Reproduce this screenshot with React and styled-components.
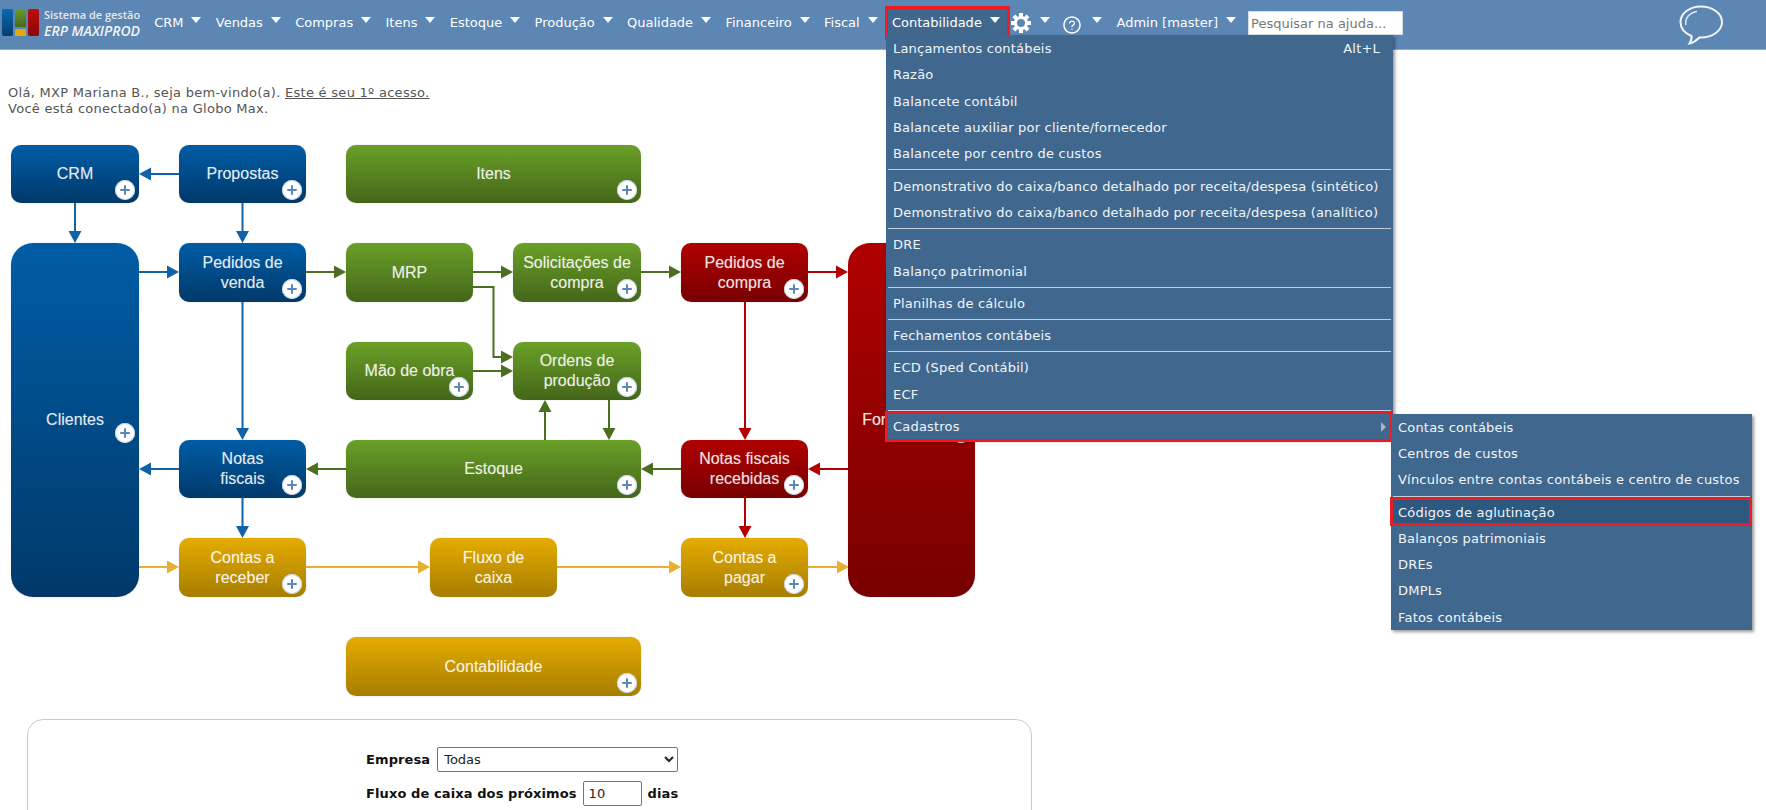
import React from "react";
import styled, { createGlobalStyle } from "styled-components";
import { AiOutlineQuestionCircle } from "react-icons/ai";

const GlobalStyle = createGlobalStyle`
  html, body {
    margin: 0;
    padding: 0;
    height: 810px;
    overflow: hidden;
    background: #fff;
  }
  body {
    font-family: "DejaVu Sans", Verdana, sans-serif;
    font-size: 13px;
    color: #555;
  }
`;

const tones = {
  blue: "linear-gradient(#005da6, #00396a)",
  green: "linear-gradient(#6aa028, #446619)",
  red: "linear-gradient(#b00000, #780000)",
  gold: "linear-gradient(#e5ac00, #a67d00)",
};

const arrowColors = {
  blue: "#0f62a8",
  green: "#4b6f1e",
  red: "#b40000",
  gold: "#e8b030",
};

const Page = styled.div`
  position: relative;
  width: 1766px;
  height: 810px;
  overflow: hidden;
`;

const Header = styled.header`
  display: flex;
  align-items: flex-start;
  height: 49px;
  background: #5c86b3;
  border-bottom: 1px solid #9aa9b8;
`;

const Logo = styled.div`
  display: flex;
  gap: 5px;
  width: 147px;
  flex: none;
  padding-top: 9px;
  box-sizing: border-box;
  padding-left: 2px;
`;

const LogoText = styled.div`
  font-family: "Open Sans", sans-serif;
  color: #e4e9ee;
  line-height: 14px;
  white-space: nowrap;
`;

const LogoTop = styled.div`
  font-size: 11px;
  font-weight: 600;
  margin-top: -1px;
`;

const LogoName = styled.div`
  font-size: 14px;
  font-weight: 600;
  font-style: italic;
  margin-top: 2px;
  color: #f0f3f6;
`;

const Nav = styled.nav`
  display: flex;
  align-items: flex-start;
  padding-top: 9px;
  flex: none;
`;

const NavItem = styled.div`
  position: relative;
  display: flex;
  align-items: flex-start;
  height: 26px;
  padding: 0 ${(p) => p.$right ?? 7.15}px 0 ${(p) => p.$left ?? 7.15}px;
  color: #fff;
  line-height: 28px;
  white-space: nowrap;
  background: ${(p) => (p.$active ? "#40688f" : "transparent")};

  ${(p) =>
    p.$active &&
    `
    &::after {
      content: "";
      position: absolute;
      inset: -3px -3px -5px 0;
      border: 3px solid #ed1c24;
      pointer-events: none;
    }
  `}
`;

const Caret = styled.span`
  width: 0;
  height: 0;
  margin: 8px 0 0 ${(p) => p.$gap ?? 8}px;
  border-left: 5px solid transparent;
  border-right: 5px solid transparent;
  border-top: 6px solid #fff;
  position: relative;
  z-index: 2;
`;

const IconSlot = styled.span`
  display: flex;
  margin-top: ${(p) => p.$top}px;
  font-size: ${(p) => p.$size}px;
  color: #fff;
`;

const SearchBox = styled.input`
  width: 155px;
  height: 24px;
  margin: 2px 0 0 5px;
  padding: 0 2px;
  box-sizing: border-box;
  border: 1px solid #d5dde5;
  background: #fff;
  font-family: "DejaVu Sans", Verdana, sans-serif;
  font-size: 13px;
  &::placeholder {
    color: #777;
    opacity: 1;
  }
`;

const ChatIcon = styled.svg`
  margin: 5px 43px 0 auto;
  flex: none;
`;

const Main = styled.main`
  padding-top: 35px;
`;

const Greeting = styled.div`
  padding-left: 8px;
  line-height: 16px;
  letter-spacing: 0.28px;
`;

const GreetingLink = styled.a`
  color: #555;
  text-decoration: underline;
`;

const Diagram = styled.div`
  position: relative;
  width: 1000px;
  height: 580px;
  margin-top: 13px;
`;

const ArrowLayer = styled.svg`
  position: absolute;
  inset: 0;
  overflow: visible;
`;

const Node = styled.div`
  position: absolute;
  left: ${(p) => p.$x}px;
  top: ${(p) => p.$y}px;
  width: ${(p) => p.$w}px;
  height: ${(p) => p.$h}px;
  display: flex;
  align-items: center;
  justify-content: center;
  text-align: center;
  font-family: "Liberation Sans", Arial, sans-serif;
  font-size: 16px;
  line-height: 20px;
  color: rgba(255, 255, 255, 0.86);
  text-shadow: 0 0 1px rgba(255, 255, 255, 0.35);
  background: ${(p) => tones[p.$tone]};
  border-radius: ${(p) => (p.$tall ? 22 : 10)}px;
  box-shadow: 0 0 1px rgba(0, 0, 0, 0.35);
  white-space: pre-line;
`;

const PlusBadge = styled.span`
  position: absolute;
  right: 4px;
  ${(p) => (p.$tall ? "top: 180px;" : "bottom: 3px;")}
  width: 20px;
  height: 20px;
  border-radius: 50%;
  background: #fff;
  box-shadow: inset 0 0 0 1px #c3d3e5;

  &::before,
  &::after {
    content: "";
    position: absolute;
    background: #5b86b8;
    border-radius: 1px;
  }
  &::before {
    left: 5px;
    top: 9px;
    width: 10px;
    height: 2px;
  }
  &::after {
    left: 9px;
    top: 5px;
    width: 2px;
    height: 10px;
  }
`;

const Panel = styled.section`
  width: 1005px;
  height: 140px;
  margin: 9px 0 0 27px;
  padding: 27px 0 0 338px;
  box-sizing: border-box;
  border: 1px solid #ccc;
  border-radius: 16px;
`;

const FormRow = styled.div`
  display: flex;
  align-items: center;
  height: 24px;
  margin-bottom: 10px;
  color: #111;
  font-weight: 700;
  letter-spacing: 0.1px;
  white-space: nowrap;
`;

const CompanySelect = styled.select`
  width: 241px;
  height: 25px;
  margin-left: 7px;
  padding-left: 2px;
  border: 1px solid #767676;
  border-radius: 2px;
  background: #fff;
  color: #222;
  font-family: "DejaVu Sans", Verdana, sans-serif;
  font-size: 13px;
`;

const DaysInput = styled.input`
  width: 59px;
  height: 25px;
  margin: 0 6px 0 6px;
  padding: 0 5px;
  box-sizing: border-box;
  border: 1px solid #767676;
  border-radius: 2px;
  color: #222;
  font-family: "DejaVu Sans", Verdana, sans-serif;
  font-size: 13px;
`;

const Menu = styled.ul`
  position: absolute;
  left: ${(p) => p.$x}px;
  top: ${(p) => p.$y}px;
  width: ${(p) => p.$w}px;
  margin: 0;
  padding: 0;
  list-style: none;
  background: #40688f;
  box-shadow: 2px 2px 3px rgba(0, 0, 0, 0.4);
  z-index: 5;
`;

const MenuItem = styled.li`
  position: relative;
  display: flex;
  justify-content: space-between;
  align-items: center;
  height: 26.3px;
  box-sizing: border-box;
  padding: ${(p) => (p.$sub ? 0 : 1)}px 13px 0 7px;
  color: #f2f5f8;
  letter-spacing: 0.2px;
  white-space: nowrap;
  background: ${(p) => (p.$selected ? "#2d587f" : "transparent")};

  ${(p) =>
    p.$marked &&
    `
    &::after {
      content: "";
      position: absolute;
      inset: ${p.$selected ? "-2px 0 -1px -1px" : "-2px 0 -3px -1px"};
      border: 3px solid #ed1c24;
      pointer-events: none;
    }
  `}
`;

const Separator = styled.li`
  height: 1px;
  margin: 3px 2px 2px;
  background: #c3d0dc;
`;

const SubArrow = styled.span`
  width: 0;
  height: 0;
  margin-right: -6px;
  border-top: 5px solid transparent;
  border-bottom: 5px solid transparent;
  border-left: 5px solid #a9b4bf;
`;

const navLinks = ["CRM", "Vendas", "Compras", "Itens", "Estoque", "Produção", "Qualidade", "Financeiro", "Fiscal"];

const nodes = [
  { label: "CRM", x: 11, y: 145, w: 128, h: 58, tone: "blue" },
  { label: "Propostas", x: 179, y: 145, w: 127, h: 58, tone: "blue" },
  { label: "Itens", x: 346, y: 145, w: 295, h: 58, tone: "green" },
  { label: "Clientes", x: 11, y: 243, w: 128, h: 354, tone: "blue", tall: true },
  { label: "Pedidos de\nvenda", x: 179, y: 243, w: 127, h: 59, tone: "blue" },
  { label: "MRP", x: 346, y: 243, w: 127, h: 59, tone: "green", plain: true },
  { label: "Solicitações de\ncompra", x: 513, y: 243, w: 128, h: 59, tone: "green" },
  { label: "Pedidos de\ncompra", x: 681, y: 243, w: 127, h: 59, tone: "red" },
  { label: "Fornecedores", x: 848, y: 243, w: 127, h: 354, tone: "red", tall: true },
  { label: "Mão de obra", x: 346, y: 342, w: 127, h: 58, tone: "green" },
  { label: "Ordens de\nprodução", x: 513, y: 342, w: 128, h: 58, tone: "green" },
  { label: "Notas\nfiscais", x: 179, y: 440, w: 127, h: 58, tone: "blue" },
  { label: "Estoque", x: 346, y: 440, w: 295, h: 58, tone: "green" },
  { label: "Notas fiscais\nrecebidas", x: 681, y: 440, w: 127, h: 58, tone: "red" },
  { label: "Contas a\nreceber", x: 179, y: 538, w: 127, h: 59, tone: "gold" },
  { label: "Fluxo de\ncaixa", x: 430, y: 538, w: 127, h: 59, tone: "gold", plain: true },
  { label: "Contas a\npagar", x: 681, y: 538, w: 127, h: 59, tone: "gold" },
  { label: "Contabilidade", x: 346, y: 637, w: 295, h: 59, tone: "gold" },
];

// page coordinates, the last point is the arrow tip
const arrows = [
  { tone: "blue", pts: [[179, 174], [139, 174]] },
  { tone: "blue", pts: [[75, 203], [75, 243]] },
  { tone: "blue", pts: [[242.5, 203], [242.5, 243]] },
  { tone: "blue", pts: [[139, 272], [179, 272]] },
  { tone: "blue", pts: [[242.5, 302], [242.5, 440]] },
  { tone: "blue", pts: [[179, 469], [139, 469]] },
  { tone: "blue", pts: [[242.5, 498], [242.5, 538]] },
  { tone: "green", pts: [[306, 272], [346, 272]] },
  { tone: "green", pts: [[473, 272], [513, 272]] },
  { tone: "green", pts: [[641, 272], [681, 272]] },
  { tone: "green", pts: [[473, 287], [493.5, 287], [493.5, 357], [513, 357]] },
  { tone: "green", pts: [[473, 371], [513, 371]] },
  { tone: "green", pts: [[545, 440], [545, 400]] },
  { tone: "green", pts: [[609, 400], [609, 440]] },
  { tone: "green", pts: [[346, 469], [306, 469]] },
  { tone: "green", pts: [[681, 469], [641, 469]] },
  { tone: "red", pts: [[808, 272], [848, 272]] },
  { tone: "red", pts: [[745, 302], [745, 440]] },
  { tone: "red", pts: [[848, 469], [808, 469]] },
  { tone: "red", pts: [[745, 498], [745, 538]] },
  { tone: "gold", pts: [[139, 567], [179, 567]] },
  { tone: "gold", pts: [[306, 567], [430, 567]] },
  { tone: "gold", pts: [[557, 567], [681, 567]] },
  { tone: "gold", pts: [[808, 567], [849, 567]] },
];

const DIAGRAM_TOP = 130;

const Arrow = ({ tone, pts }) => {
  const shifted = pts.map(([x, y]) => [x, y - DIAGRAM_TOP]);
  const [tx, ty] = shifted[shifted.length - 1];
  const [px, py] = shifted[shifted.length - 2];
  const dx = Math.sign(tx - px);
  const dy = Math.sign(ty - py);
  const bx = tx - dx * 12;
  const by = ty - dy * 12;
  const head = [
    [tx, ty],
    [bx - dy * 6.5, by - dx * 6.5],
    [bx + dy * 6.5, by + dx * 6.5],
  ];
  const line = [...shifted.slice(0, -1), [bx, by]];
  return (
    <g>
      <polyline
        points={line.map((p) => p.join(",")).join(" ")}
        fill="none"
        stroke={arrowColors[tone]}
        strokeWidth="2"
      />
      <polygon points={head.map((p) => p.join(",")).join(" ")} fill={arrowColors[tone]} />
    </g>
  );
};

const GearIcon = () => (
  <svg width="20" height="20" viewBox="0 0 20 20" fill="#fff">
    {[0, 45, 90, 135, 180, 225, 270, 315].map((angle) => (
      <rect key={angle} x="8" y="0" width="4" height="5" transform={`rotate(${angle} 10 10)`} />
    ))}
    <circle cx="10" cy="10" r="5.5" fill="none" stroke="#fff" strokeWidth="3" />
  </svg>
);

const App = () => (
  <Page>
    <GlobalStyle />
    <Header>
      <Logo>
        <svg width="37" height="28" viewBox="0 0 37 28">
          <defs>
            <linearGradient id="logoBlue" x2="0" y2="1">
              <stop offset="0" stopColor="#0a68b0" />
              <stop offset="1" stopColor="#05406f" />
            </linearGradient>
            <linearGradient id="logoGreen" x2="0" y2="1">
              <stop offset="0" stopColor="#6a9c2c" />
              <stop offset="1" stopColor="#46691c" />
            </linearGradient>
            <linearGradient id="logoRed" x2="0" y2="1">
              <stop offset="0" stopColor="#c00c0c" />
              <stop offset="1" stopColor="#8a0606" />
            </linearGradient>
          </defs>
          <rect x="0" y="0" width="11" height="27" rx="2" fill="url(#logoBlue)" />
          <rect x="13" y="0" width="11" height="18" rx="1" fill="url(#logoGreen)" />
          <rect x="13" y="20" width="11" height="7" rx="1" fill="#e0a90f" />
          <rect x="26" y="0" width="11" height="27" rx="2" fill="url(#logoRed)" />
        </svg>
        <LogoText>
          <LogoTop>Sistema de gestão</LogoTop>
          <LogoName>ERP MAXIPROD</LogoName>
        </LogoText>
      </Logo>
      <Nav>
        {navLinks.map((label) => (
          <NavItem key={label}>
            {label}
            <Caret />
          </NavItem>
        ))}
        <NavItem $active>
          Contabilidade
          <Caret />
        </NavItem>
        <NavItem $left={4} $right={4}>
          <IconSlot $top={4}>
            <GearIcon />
          </IconSlot>
          <Caret $gap={9} />
        </NavItem>
        <NavItem $left={8} $right={7.5}>
          <IconSlot $size={20} $top={6}>
            <AiOutlineQuestionCircle />
          </IconSlot>
          <Caret $gap={10} />
        </NavItem>
        <NavItem $left={7} $right={7}>
          Admin [master]
          <Caret />
        </NavItem>
        <SearchBox placeholder="Pesquisar na ajuda..." />
      </Nav>
      <ChatIcon width="44" height="40" viewBox="0 0 44 40" fill="none">
        <path
          d="M22 1.5C10.5 1.5 1.5 8.5 1.5 17c0 6.500 5 11.500 11 14 .5 2.500-.5 5-2 7.500 4.500-1 7.500-3.500 10-6h1.500c11.500 0 21-6.800 21-15.500S33.500 1.500 22 1.500Z"
          stroke="#f2f5f8"
          strokeWidth="2"
        />
        <path d="M7 20C5.500 13 11 7.500 18 6.500" stroke="#dfe7ef" strokeWidth="1.5" />
      </ChatIcon>
    </Header>

    <Main>
      <Greeting>
        Olá, MXP Mariana B., seja bem-vindo(a). <GreetingLink>Este é seu 1º acesso.</GreetingLink>
        <br />
        Você está conectado(a) na Globo Max.
      </Greeting>

      <Diagram>
        <ArrowLayer width="1000" height="580">
          {arrows.map((arrow, i) => (
            <Arrow key={i} tone={arrow.tone} pts={arrow.pts} />
          ))}
        </ArrowLayer>
        {nodes.map((n) => (
          <Node
            key={n.label}
            $x={n.x}
            $y={n.y - DIAGRAM_TOP}
            $w={n.w}
            $h={n.h}
            $tone={n.tone}
            $tall={n.tall}
          >
            {n.label}
            {!n.plain && <PlusBadge $tall={n.tall} />}
          </Node>
        ))}
      </Diagram>

      <Panel>
        <FormRow>
          Empresa
          <CompanySelect defaultValue="Todas">
            <option>Todas</option>
          </CompanySelect>
        </FormRow>
        <FormRow>
          Fluxo de caixa dos próximos
          <DaysInput defaultValue="10" />
          dias
        </FormRow>
      </Panel>
    </Main>

    <Menu $x={886} $y={35} $w={507}>
      <MenuItem>
        Lançamentos contábeis
        <span>Alt+L</span>
      </MenuItem>
      <MenuItem>Razão</MenuItem>
      <MenuItem>Balancete contábil</MenuItem>
      <MenuItem>Balancete auxiliar por cliente/fornecedor</MenuItem>
      <MenuItem>Balancete por centro de custos</MenuItem>
      <Separator />
      <MenuItem>Demonstrativo do caixa/banco detalhado por receita/despesa (sintético)</MenuItem>
      <MenuItem>Demonstrativo do caixa/banco detalhado por receita/despesa (analítico)</MenuItem>
      <Separator />
      <MenuItem>DRE</MenuItem>
      <MenuItem>Balanço patrimonial</MenuItem>
      <Separator />
      <MenuItem>Planilhas de cálculo</MenuItem>
      <Separator />
      <MenuItem>Fechamentos contábeis</MenuItem>
      <Separator />
      <MenuItem>ECD (Sped Contábil)</MenuItem>
      <MenuItem>ECF</MenuItem>
      <Separator />
      <MenuItem $marked>
        Cadastros
        <SubArrow />
      </MenuItem>
    </Menu>

    <Menu $x={1391} $y={414} $w={361}>
      <MenuItem $sub>Contas contábeis</MenuItem>
      <MenuItem $sub>Centros de custos</MenuItem>
      <MenuItem $sub>Vínculos entre contas contábeis e centro de custos</MenuItem>
      <Separator />
      <MenuItem $sub $marked $selected>
        Códigos de aglutinação
      </MenuItem>
      <MenuItem $sub>Balanços patrimoniais</MenuItem>
      <MenuItem $sub>DREs</MenuItem>
      <MenuItem $sub>DMPLs</MenuItem>
      <MenuItem $sub>Fatos contábeis</MenuItem>
    </Menu>
  </Page>
);

export default App;
